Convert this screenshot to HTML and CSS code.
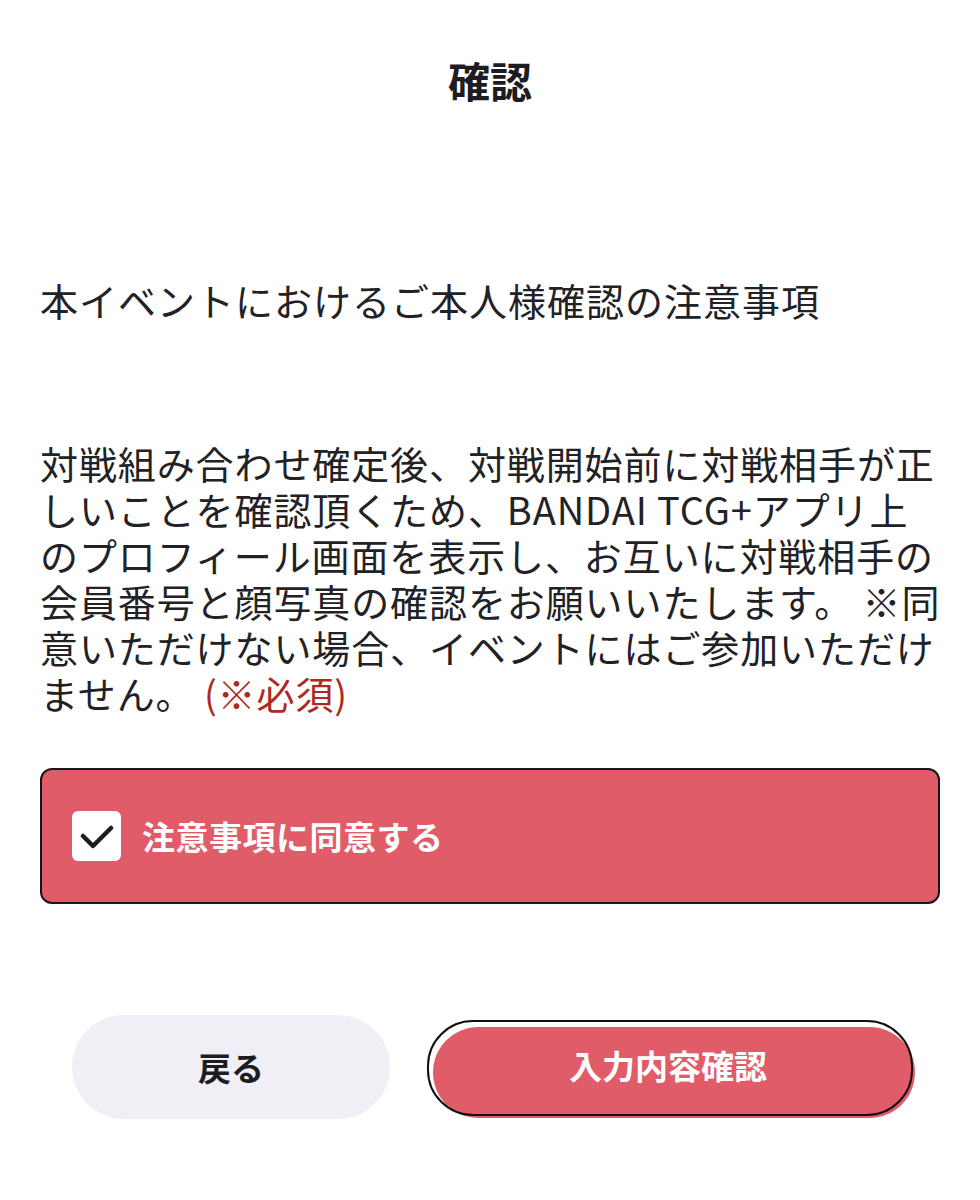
FILE: index.html
```html
<!DOCTYPE html>
<html lang="ja">
<head>
<meta charset="utf-8">
<link rel="stylesheet" href="styles.css">
</head>
<body>
<main class="page">
  <h1 class="title">確認</h1>
  <p class="heading">本イベントにおけるご本人様確認の注意事項</p>
  <p class="body">対戦組み合わせ確定後、対戦開始前に対戦相手が正<br>しいことを確認頂くため、BANDAI TCG+アプリ上<br>のプロフィール画面を表示し、お互いに対戦相手の<br>会員番号と顔写真の確認をお願いいたします。 ※同<br>意いただけない場合、イベントにはご参加いただけ<br>ません。 <span class="req">(※必須)</span></p>
  <label class="agree">
    <span class="box">
      <svg width="34" height="28" viewBox="0 0 34 28"><path d="M3 13 L13 23 L31 5" fill="none" stroke="#1c1c22" stroke-width="4.5" stroke-linecap="round" stroke-linejoin="round"/></svg>
    </span>
    <span class="agree-text">注意事項に同意する</span>
  </label>
  <div class="actions">
    <button class="btn back">戻る</button>
    <button class="btn confirm">入力内容確認</button>
  </div>
</main>
</body>
</html>
```
FILE: styles.css
```css
* { box-sizing: border-box; }
html, body { margin: 0; padding: 0; background: #fff; }
body {
  font-family: "Noto Sans CJK JP", "Noto Sans", sans-serif;
  color: #222226;
}
.page {
  width: 980px;
  padding: 0 40px;
}
.title {
  margin: 50px 0 0;
  text-align: center;
  font-size: 42px;
  line-height: 60px;
  font-weight: 700;
  color: #1c1c22;
}
.heading {
  margin: 167px 0 0;
  font-size: 38px;
  line-height: 46px;
  letter-spacing: 1px;
}
.body {
  margin: 117px -20px 0 0;
  font-size: 38px;
  line-height: 46px;
  letter-spacing: 0.9px;
  white-space: nowrap;
}
.req { color: #ad2a22; }
.agree {
  margin-top: 52px;
  height: 136px;
  display: flex;
  align-items: center;
  gap: 21px;
  padding-left: 30px;
  background: #e05c69;
  border: 2px solid #161616;
  border-radius: 12px;
}
.box {
  width: 49px;
  height: 50px;
  background: #fff;
  border-radius: 6px;
  display: flex;
  align-items: center;
  justify-content: center;
}
.box svg { margin-left: 1px; margin-top: 2px; }
.agree-text {
  color: #fff;
  font-size: 33px;
  font-weight: 700;
  letter-spacing: 0.5px;
}
.actions {
  margin-top: 111px;
  display: flex;
  align-items: flex-start;
  padding-left: 32px;
}
.btn {
  font-family: "Noto Sans CJK JP", "Noto Sans", sans-serif;
  font-size: 33px;
  font-weight: 700;
  border: none;
  padding: 0;
  cursor: pointer;
  line-height: 1;
}
.back {
  width: 318px;
  height: 104px;
  border-radius: 52px;
  background: #efeff5;
  color: #1c1c22;
}
.confirm {
  position: relative;
  margin-left: 43px;
  margin-top: 12px;
  width: 482px;
  height: 91px;
  border-radius: 46px;
  background: #e05c69;
  color: #fff;
  padding-right: 12px;
  padding-bottom: 14px;
}
.confirm::before {
  content: "";
  position: absolute;
  left: -6px;
  top: -7px;
  width: 482px;
  height: 92px;
  border: 2px solid #111;
  border-radius: 46px;
}
```
